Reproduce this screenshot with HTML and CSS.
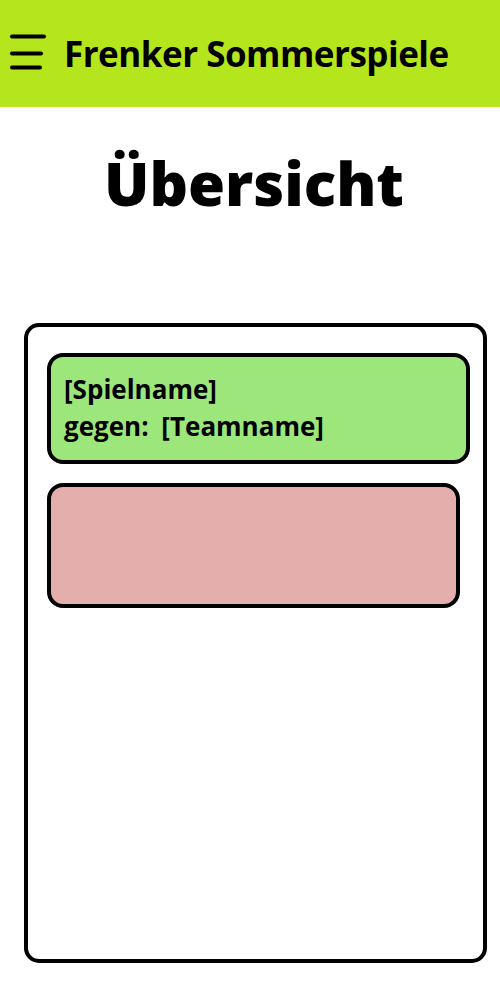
FILE: index.html
```html
<!DOCTYPE html>
<html lang="de">
<head>
<meta charset="utf-8">
<title>Frenker Sommerspiele</title>
<link rel="stylesheet" href="styles.css">
</head>
<body>
<header class="topbar">
  <svg class="menu-icon" width="40" height="40" viewBox="0 0 40 40" aria-hidden="true">
    <line x1="4" y1="3.5" x2="36" y2="3.5" />
    <line x1="4" y1="20.5" x2="33" y2="20.5" />
    <line x1="4" y1="34.5" x2="32" y2="34.5" />
  </svg>
  <span class="brand">Frenker Sommerspiele</span>
</header>
<main class="content">
  <h1 class="page-title">Übersicht</h1>
  <section class="panel">
    <div class="card card-win">
      <div class="game">[Spielname]</div>
      <div class="opponent">gegen: [Teamname]</div>
    </div>
    <div class="card card-loss"></div>
  </section>
</main>
</body>
</html>
```
FILE: styles.css
```css
html, body {
  margin: 0;
  padding: 0;
  background: #ffffff;
  font-family: "Open Sans", "Noto Sans", "DejaVu Sans", sans-serif;
  color: #000;
}

.topbar {
  height: 107px;
  background: #b5e61d;
  display: flex;
  align-items: center;
  padding-left: 8px;
  box-sizing: border-box;
}

.menu-icon {
  display: block;
  margin-top: -2px;
  stroke: #000;
  stroke-width: 4;
  stroke-linecap: round;
  flex: none;
}

.brand {
  margin-left: 16px;
  font-weight: 700;
  font-size: 35px;
  letter-spacing: -0.5px;
}

.content {
  display: flex;
  flex-direction: column;
}

.page-title {
  margin: 36px 0 0 0;
  text-align: center;
  font-size: 60px;
  font-weight: 800;
  line-height: 80px;
  padding-left: 8px;
}

.panel {
  margin: 100px 0 0 24px;
  width: 463px;
  height: 640px;
  box-sizing: border-box;
  border: 4px solid #000;
  border-radius: 15px;
  padding: 26px 0 0 19px;
  display: flex;
  flex-direction: column;
  gap: 19px;
}

.card {
  box-sizing: border-box;
  border: 4px solid #000;
  border-radius: 16px;
}

.card-win {
  width: 423px;
  height: 111px;
  background: #9de67c;
  padding: 14px 0 0 13px;
  font-weight: 700;
  font-size: 26px;
  line-height: 37px;
  word-spacing: 6px;
}

.card-loss {
  width: 413px;
  height: 125px;
  background: #e4aead;
}
```
